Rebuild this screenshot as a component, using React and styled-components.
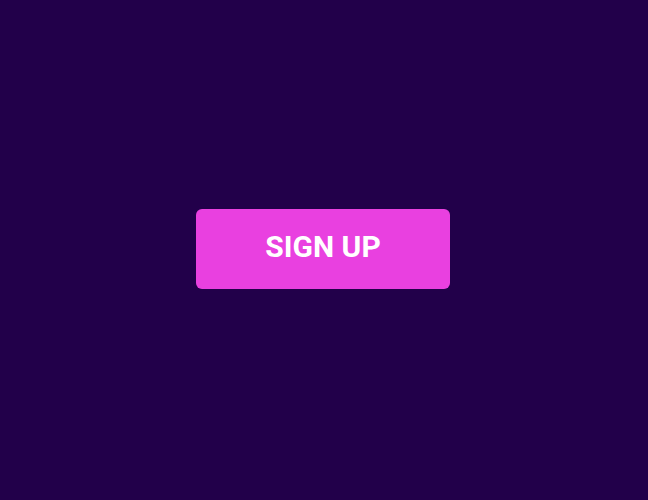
import styled, { createGlobalStyle } from 'styled-components';

const GlobalStyle = createGlobalStyle`
  html, body {
    margin: 0;
    padding: 0;
    height: 100%;
    background: #22004a;
  }
  #root {
    height: 100%;
  }
`;

const Page = styled.div`
  box-sizing: border-box;
  height: 100%;
  padding: 0 2px 2px 0;
  display: flex;
  align-items: center;
  justify-content: center;
  background: #22004a;
`;

const Button = styled.button`
  width: 254px;
  height: 80px;
  padding: 0 0 6px;
  border: none;
  border-radius: 6px;
  background: #e940e0;
  color: #fff;
  font-family: Roboto, "Liberation Sans", sans-serif;
  font-weight: 700;
  font-size: 30px;
  text-transform: uppercase;
  cursor: pointer;
`;

const App = () => {
  return (
    <>
      <GlobalStyle />
      <Page>
        <Button>Sign up</Button>
      </Page>
    </>
  );
};

export default App;
